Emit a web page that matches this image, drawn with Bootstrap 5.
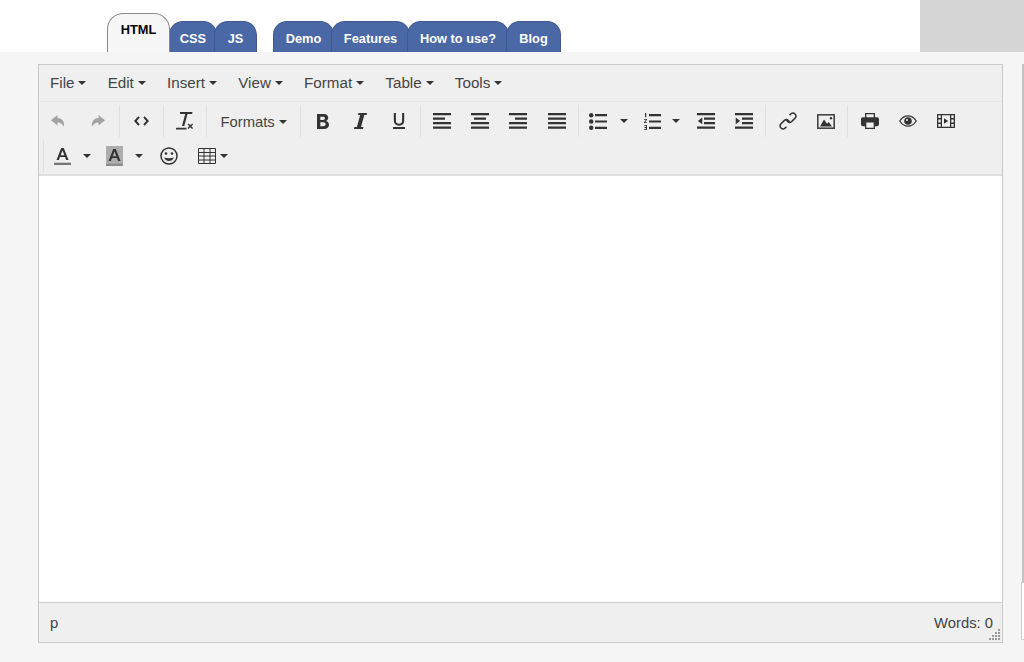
<!doctype html>
<html lang="en">
<head>
<meta charset="utf-8">
<link rel="stylesheet" href="https://cdn.jsdelivr.net/npm/bootstrap@5.3.0/dist/css/bootstrap.min.css">
<style>
html,body{height:100%;overflow:hidden}
body{background:#f5f5f5;font-family:"Liberation Sans",Arial,sans-serif;color:#333}
.topbar{height:52px;background:#fff;padding-left:107px}
.tabset{height:52px}
.tabbtn{height:31px;border:1px solid #3f5a8f;border-bottom:0;border-radius:14px 14px 0 0;background:#4a68a6;color:#fff;font-weight:700;font-size:12.8px;padding-top:7px;text-align:center;margin-left:-3px;flex:none}
.tabbtn.on{height:39px;width:63px;background:#f7f7f7;color:#000;border-color:#8a8a8a;padding-top:6px;margin-left:0;border-radius:16px 16px 0 0;z-index:1}
.tabbtn.on + .tabbtn{margin-left:-1px}
.w-css{width:48px}.w-js{width:43px}.w-demo{width:61px;margin-left:16px}.w-feat{width:79px}.w-how{width:102px}.w-blog{width:55px}
.grayblock{width:104px;height:52px;background:#d5d5d5}
.mainarea{padding:12px 0 0 38px;position:relative}
.editorbox{width:965px;height:579px;border:1px solid #c9c9c9;background:#efefef}
.menurow{height:37px;padding:0 0 0 11px;border-bottom:1px solid #e6e6e6;gap:21.2px;font-size:15.2px;color:#444;flex:none}
.caretmark{display:inline-block;border-top:4px solid #333;border-left:4px solid transparent;border-right:4px solid transparent;margin-left:4px;vertical-align:3px}
.toolrow{height:34px}
.toolrow svg{display:block;flex:none}
.tbtn{width:38px;height:34px;display:flex;align-items:center;justify-content:center;color:#333;flex:none}
.tbtn.dim{color:#a3a3a3}
.tbtn.tiny{width:20px}
.tbtn.w-bullet{width:34px}
.tbtn.w-care1{width:18px}
.tbtn.w-care2{width:10px}
.tbtn.leftfit{justify-content:flex-start;margin-left:10px}
.sepline{width:1px;height:32px;background:#e0e0e0;flex:none;margin:0 2.2px}
.fmt{font-size:14.8px;color:#444;width:89px;text-align:center;flex:none;padding-top:3px}
.gap2px{margin-left:2px}
.gap1px{margin-left:1px}
.gap5px{margin-left:5px}
.gap6px{margin-left:6px}
.gap7px{margin-left:7px}
.gap8px{margin-left:8px}
.row2{margin-top:1px;padding-left:4px}
.row2 .sepline{margin:0}
.toolswrap{height:74px;border-bottom:2px solid #dedede;padding-top:2px;flex:none}
.editarea{height:427px;background:#fff;border-bottom:1px solid #d0d0d0;flex:none}
.statusrow{height:39px;padding:2px 9px 0 11px;font-size:14.8px;color:#444;position:relative;flex:none}
.griphandle{position:absolute;right:2px;bottom:2px}
.edgeline{position:absolute;left:1022px;width:2px;background:#c4c4c4;top:12px;height:530px}
.edgebox{position:absolute;left:1021px;width:3px;background:#fff;border:1px solid #cfcfcf;border-right:0;top:530px;height:58px}
</style>
</head>
<body>
<div class="topbar d-flex justify-content-between">
 <div class="tabset d-flex align-items-end">
  <div class="tabbtn on">HTML</div><div class="tabbtn w-css">CSS</div><div class="tabbtn w-js">JS</div>
  <div class="tabbtn w-demo">Demo</div><div class="tabbtn w-feat">Features</div><div class="tabbtn w-how">How to use?</div><div class="tabbtn w-blog">Blog</div>
 </div>
 <div class="grayblock"></div>
</div>
<div class="mainarea">
 <div class="editorbox d-flex flex-column">
  <div class="menurow d-flex align-items-center">
   <span>File<i class="caretmark"></i></span><span>Edit<i class="caretmark"></i></span><span>Insert<i class="caretmark"></i></span><span>View<i class="caretmark"></i></span><span>Format<i class="caretmark"></i></span><span>Table<i class="caretmark"></i></span><span>Tools<i class="caretmark"></i></span>
  </div>
  <div class="toolswrap">
   <div class="toolrow d-flex align-items-center">
    <div class="tbtn dim"><svg width="14" height="12" viewBox="0 0 14 12"><path fill="currentColor" d="M6.500 0 0 5.300l6.500 5.200V7.400c3 0 4.500 1 6.500 4.100.8-5-2-8.600-6.500-8.600z"/></svg></div>
    <div class="tbtn dim gap2px"><svg width="14" height="12" viewBox="0 0 14 12"><path fill="currentColor" d="M7.500 0 14 5.300l-6.500 5.200V7.400c-3 0-4.500 1-6.500 4.100-.8-5 2-8.600 6.500-8.600z"/></svg></div>
    <div class="sepline"></div>
    <div class="tbtn"><svg width="15" height="10" viewBox="0 0 15 10"><path fill="none" stroke="currentColor" stroke-width="1.900" d="M5 1 1.300 5 5 9M10 1l3.700 4L10 9"/></svg></div>
    <div class="sepline"></div>
    <div class="tbtn"><svg width="18" height="19" viewBox="0 0 18 19"><path fill="currentColor" d="M4 0h12.500l-.4 2h-4.600L8.300 14H6L9.200 2H4zM0 15.700h10.500v1.800H0zM11.500 12.500l1-1 1.800 1.800 1.800-1.800 1 1-1.800 1.800 1.800 1.800-1 1-1.800-1.800-1.800 1.800-1-1 1.800-1.800z"/></svg></div>
    <div class="sepline"></div>
    <div class="fmt">Formats<i class="caretmark"></i></div>
    <div class="sepline"></div>
    <div class="tbtn"><svg width="12" height="15" viewBox="0 0 12 15"><path fill="currentColor" fill-rule="evenodd" d="M0 0h6.500C10 0 11.200 2 11.200 3.800 11.200 5.300 10.300 6.500 9 7c1.800.5 3 1.800 3 3.800 0 2.500-2 4.200-5 4.200H0zM3.300 2.700v3.200h2.700c1.200 0 1.900-.6 1.900-1.600s-.7-1.600-1.900-1.600zM3.300 8.300v4h3c1.500 0 2.300-.8 2.300-2s-.8-2-2.300-2z"/></svg></div>
    <div class="tbtn"><svg width="13" height="16" viewBox="0 0 13 16"><path fill="currentColor" d="M4.500 0H13l-.4 2h-2.300L7 14h2.400l-.4 2H0l.4-2h2.500L6.200 2H4z"/></svg></div>
    <div class="tbtn"><svg width="12" height="16" viewBox="0 0 12 16"><path fill="currentColor" d="M.8 0h2.100v7.500c0 2.200 1.100 3.300 3.100 3.300s3.100-1.100 3.100-3.300V0h2.100v7.500c0 3.400-2 5.200-5.200 5.200S.8 10.900.8 7.500zM0 14h12v2H0z"/></svg></div>
    <div class="sepline"></div>
    <div class="tbtn"><svg width="18" height="16" viewBox="0 0 18 16"><path fill="currentColor" d="M0 0h18v2.200H0zM0 4.500h12v2.200H0zM0 9h18v2.200H0zM0 13.600h18v2.200H0z"/></svg></div>
    <div class="tbtn"><svg width="18" height="16" viewBox="0 0 18 16"><path fill="currentColor" d="M0 0h18v2.200H0zM3 4.500h12v2.200H3zM0 9h18v2.200H0zM0 13.600h18v2.200H0z"/></svg></div>
    <div class="tbtn"><svg width="18" height="16" viewBox="0 0 18 16"><path fill="currentColor" d="M0 0h18v2.200H0zM6 4.500h12v2.200H6zM0 9h18v2.200H0zM0 13.600h18v2.200H0z"/></svg></div>
    <div class="tbtn gap1px"><svg width="18" height="16" viewBox="0 0 18 16"><path fill="currentColor" d="M0 0h18v2.200H0zM0 4.500h18v2.200H0zM0 9h18v2.200H0zM0 13.600h18v2.200H0z"/></svg></div>
    <div class="sepline"></div>
    <div class="tbtn w-bullet"><svg width="18" height="17" viewBox="0 0 18 17"><g fill="currentColor"><circle cx="2.200" cy="2.200" r="2.200"/><circle cx="2.200" cy="8.500" r="2.200"/><circle cx="2.200" cy="14.800" r="2.200"/><path d="M6 1h12v2.200H6zM6 7.400h12v2.200H6zM6 13.800h12v2.200H6z"/></g></svg></div>
    <div class="tbtn w-care1"><i class="caretmark m-0"></i></div>
    <div class="tbtn"><svg width="17" height="17" viewBox="0 0 17 17"><g fill="currentColor"><path d="M5 1h12v2.200H5zM5 7.400h12v2.200H5zM5 13.800h12v2.200H5z"/><path d="M1 0h1.200v4.200H1zM0 6h3v.8L1 9.200h2v.8H0v-.8l2-2.400H0zM0 12h3v5H0v-.8h2v-1.300H.5v-.8H2v-1.300H0z"/></g></svg></div>
    <div class="tbtn w-care2"><i class="caretmark m-0"></i></div>
    <div class="tbtn gap6px"><svg width="18" height="16" viewBox="0 0 18 16"><path fill="currentColor" d="M0 0h18v2.200H0zM7 4.500h11v2.200H7zM7 9h11v2.200H7zM0 13.600h18v2.200H0zM5.300 4.600v6.600L.8 7.900z"/></svg></div>
    <div class="tbtn"><svg width="18" height="16" viewBox="0 0 18 16"><path fill="currentColor" d="M0 0h18v2.200H0zM7 4.500h11v2.200H7zM7 9h11v2.200H7zM0 13.600h18v2.200H0zM.7 4.600v6.600l4.500-3.300z"/></svg></div>
    <div class="sepline"></div>
    <div class="tbtn"><svg width="18" height="18" viewBox="0 0 18 18"><g fill="none" stroke="currentColor" stroke-width="1.500"><path d="M10.500 3.200 12 1.800c1.300-1 2.900-.9 4 .2s1.200 2.700.2 4L12.600 9.600c-1.300 1-2.900.9-4-.2-.5-.5-.8-1.100-.9-1.700"/><path d="M7.500 14.800 6 16.200c-1.300 1-2.900.9-4-.2s-1.200-2.700-.2-4l3.600-3.600c1.300-1 2.900-.9 4 .2.500.5.800 1.100.9 1.700"/></g></svg></div>
    <div class="tbtn"><svg width="18" height="15" viewBox="0 0 18 15"><rect x=".8" y=".8" width="16.400" height="13.400" fill="#efefef" stroke="#444" stroke-width="1.600"/><path fill="currentColor" d="M3 12.500l4-7 3 4.200 1.800-1.700 3.200 4.500z"/><circle cx="14" cy="4.200" r="1.200" fill="currentColor"/></svg></div>
    <div class="sepline"></div>
    <div class="tbtn gap1px"><svg width="18" height="16" viewBox="0 0 18 16"><path fill="currentColor" fill-rule="evenodd" d="M4 0h10v4.200h2c1.200 0 2 .8 2 2v5c0 1-.8 2-2 2h-2V16H4v-2.800H2c-1.200 0-2-1-2-2v-5c0-1.200.8-2 2-2h2zM5.300 1.300v2.900h7.400V1.300zM5.300 9.500v5.200h7.400V9.500z"/></svg></div>
    <div class="tbtn"><svg width="18" height="12" viewBox="0 0 18 12"><path fill="none" stroke="currentColor" stroke-width="1.200" d="M.7 6C3 2.500 6 .8 9 .8s6 1.700 8.300 5.200C15 9.500 12 11.200 9 11.200S3 9.500.7 6z"/><circle cx="9" cy="6" r="3.800" fill="currentColor"/><circle cx="8" cy="5" r="1" fill="#efefef"/></svg></div>
    <div class="tbtn"><svg width="18" height="14" viewBox="0 0 18 14"><path fill="currentColor" fill-rule="evenodd" d="M0 0h18v14H0zM1.300 1.300V4h2.400V1.300zM1.300 5.500v3h2.400v-3zM1.300 10v2.700h2.400V10zM14.300 1.300V4h2.400V1.300zM14.300 5.500v3h2.400v-3zM14.300 10v2.700h2.400V10zM5 1.300v11.400h8V1.300z"/><path fill="currentColor" d="M7 4.200l4.200 2.800L7 9.800z"/></svg></div>
   </div>
   <div class="toolrow row2 d-flex align-items-center">
    <div class="sepline"></div>
    <div class="tbtn tiny gap8px"><svg width="17" height="18" viewBox="0 0 17 18"><path fill="currentColor" fill-rule="evenodd" d="M7.200 1h2.600l4.700 12h-2.400l-1-2.900H5.900L4.900 13H2.500zM8.500 3.500 6.600 8.300h3.800z"/><path fill="#777" d="M0 15.700h17V18H0z"/></svg></div>
    <div class="tbtn tiny gap5px"><i class="caretmark m-0"></i></div>
    <div class="tbtn tiny gap7px"><svg width="17" height="20" viewBox="0 0 17 20"><path fill="#adadad" d="M0 0h17v20H0z"/><path fill="#333" fill-rule="evenodd" d="M7.200 3h2.600l4.700 12h-2.400l-1-2.900H5.900L4.900 15H2.500zM8.500 5.500 6.600 10.300h3.800z"/><path fill="#8c8c8c" d="M0 17.700h17V20H0z"/></svg></div>
    <div class="tbtn tiny gap5px"><i class="caretmark m-0"></i></div>
    <div class="tbtn gap1px"><svg width="18" height="18" viewBox="0 0 18 18"><circle cx="9" cy="9" r="8" fill="none" stroke="currentColor" stroke-width="1.500"/><circle cx="6" cy="6.500" r="1.300" fill="currentColor"/><circle cx="12" cy="6.500" r="1.300" fill="currentColor"/><path d="M4 10.500c1 2.500 3 3.500 5 3.500s4-1 5-3.500c-3 1-7 1-10 0z" fill="currentColor"/></svg></div>
    <div class="tbtn leftfit"><svg width="18" height="16" viewBox="0 0 18 16"><path fill="none" stroke="currentColor" d="M.5.500h17v15H.5zM.5 4.500h17M.5 8h17M.5 12h17M6 .5v15M12 .5v15"/></svg><i class="caretmark m-0 ms-1"></i></div>
   </div>
  </div>
  <div class="editarea"></div>
  <div class="statusrow d-flex justify-content-between align-items-center">
   <span>p</span><span>Words: 0</span>
   <svg class="griphandle" width="11" height="11" viewBox="0 0 11 11"><path fill="#999" d="M9 0h2v2H9zM9 3h2v2H9zM6 3h2v2H6zM9 6h2v2H9zM6 6h2v2H6zM3 6h2v2H3zM9 9h2v2H9zM6 9h2v2H6zM3 9h2v2H3zM0 9h2v2H0z"/></svg>
  </div>
 </div>
 <div class="edgeline"></div>
 <div class="edgebox"></div>
</div>
<script src="https://cdn.jsdelivr.net/npm/bootstrap@5.3.0/dist/js/bootstrap.bundle.min.js"></script>
</body>
</html>
